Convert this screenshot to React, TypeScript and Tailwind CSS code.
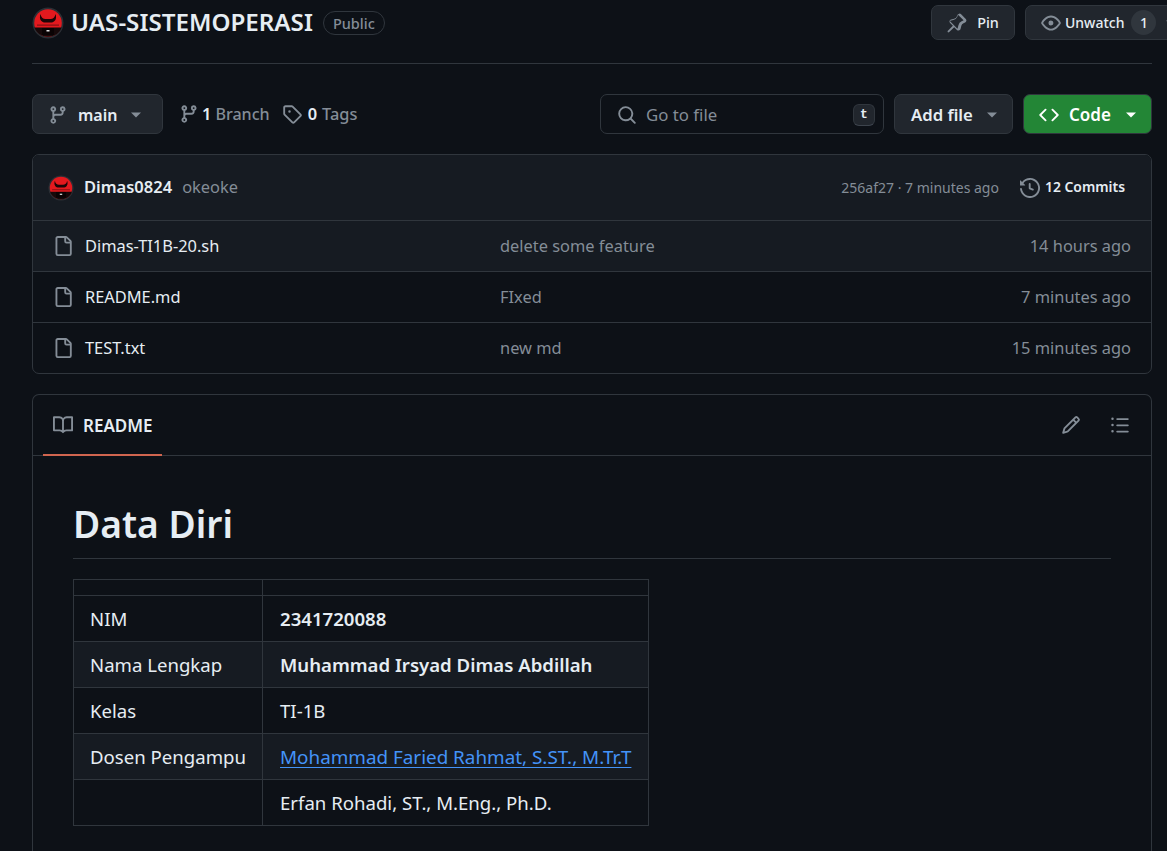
import type { ReactNode } from "react";

const icons = {
  branch: "M9.5 3.25a2.25 2.25 0 1 1 3 2.122V6A2.5 2.5 0 0 1 10 8.5H6a1 1 0 0 0-1 1v1.128a2.251 2.251 0 1 1-1.5 0V5.372a2.25 2.25 0 1 1 1.5 0v1.836A2.493 2.493 0 0 1 6 7h4a1 1 0 0 0 1-1v-.628A2.25 2.25 0 0 1 9.5 3.25Zm-6 0a.75.75 0 1 0 1.5 0 .75.75 0 0 0-1.5 0Zm8.25-.75a.75.75 0 1 0 0 1.5.75.75 0 0 0 0-1.5ZM4.25 12a.75.75 0 1 0 0 1.5.75.75 0 0 0 0-1.5Z",
  tag: "M1 7.775V2.75C1 1.784 1.784 1 2.75 1h5.025c.464 0 .91.184 1.238.513l6.25 6.25a1.75 1.75 0 0 1 0 2.474l-5.026 5.026a1.75 1.75 0 0 1-2.474 0l-6.25-6.25A1.75 1.75 0 0 1 1 7.775Zm1.5 0c0 .066.026.13.073.177l6.25 6.25a.25.25 0 0 0 .354 0l5.025-5.025a.25.25 0 0 0 0-.354l-6.25-6.25a.25.25 0 0 0-.177-.073H2.75a.25.25 0 0 0-.25.25ZM6 5a1 1 0 1 1 0 2 1 1 0 0 1 0-2Z",
  pin: "m11.294.984 3.722 3.722a1.75 1.75 0 0 1-.504 2.826l-1.327.613a3.089 3.089 0 0 0-1.707 2.084l-.584 2.454c-.317 1.332-1.972 1.8-2.94.832L5.75 11.311 1.78 15.28a.749.749 0 0 1-1.275-.326.749.749 0 0 1 .215-.734L4.69 10.25 2.487 8.046c-.968-.968-.5-2.623.832-2.94l2.454-.584a3.08 3.08 0 0 0 2.084-1.707l.613-1.327a1.75 1.75 0 0 1 2.824-.504Zm-2.128.743a.25.25 0 0 0-.403.072l-.613 1.327a4.582 4.582 0 0 1-3.1 2.539l-2.454.584a.25.25 0 0 0-.119.42l5.657 5.657a.25.25 0 0 0 .42-.119l.584-2.454a4.588 4.588 0 0 1 2.539-3.1l1.327-.613a.25.25 0 0 0 .072-.403l-3.91-3.91Z",
  eye: "M8 2c1.981 0 3.671.992 4.933 2.078 1.27 1.091 2.187 2.345 2.637 3.023a1.62 1.62 0 0 1 0 1.798c-.45.678-1.367 1.932-2.637 3.023C11.67 13.008 9.981 14 8 14c-1.981 0-3.671-.992-4.933-2.078C1.797 10.83.88 9.576.43 8.898a1.62 1.62 0 0 1 0-1.798c.45-.677 1.367-1.931 2.637-3.022C4.33 2.992 6.019 2 8 2ZM1.679 7.932a.12.12 0 0 0 0 .136c.411.622 1.241 1.75 2.366 2.717C5.176 11.758 6.527 12.5 8 12.5c1.473 0 2.825-.742 3.955-1.715 1.124-.967 1.954-2.096 2.366-2.717a.12.12 0 0 0 0-.136c-.412-.621-1.242-1.75-2.366-2.717C10.824 4.242 9.473 3.5 8 3.5c-1.473 0-2.825.742-3.955 1.715-1.124.967-1.954 2.096-2.366 2.717ZM8 10a2 2 0 1 1-.001-3.999A2 2 0 0 1 8 10Z",
  search: "M10.68 11.74a6 6 0 0 1-7.922-8.982 6 6 0 0 1 8.982 7.922l3.04 3.04a.749.749 0 0 1-.326 1.275.749.749 0 0 1-.734-.215ZM11.5 7a4.499 4.499 0 1 0-8.997 0A4.499 4.499 0 0 0 11.5 7Z",
  code: "m11.28 3.22 4.25 4.25a.75.75 0 0 1 0 1.06l-4.25 4.25a.749.749 0 0 1-1.275-.326.749.749 0 0 1 .215-.734L13.94 8l-3.72-3.72a.749.749 0 0 1 .326-1.275.749.749 0 0 1 .734.215Zm-6.56 0a.751.751 0 0 1 1.042.018.751.751 0 0 1 .018 1.042L2.06 8l3.72 3.72a.749.749 0 0 1-.326 1.275.749.749 0 0 1-.734-.215L.47 8.53a.75.75 0 0 1 0-1.06Z",
  history: "m.427 1.927 1.215 1.215a8.002 8.002 0 1 1-1.6 5.685.75.75 0 1 1 1.493-.154 6.5 6.5 0 1 0 1.18-4.458l1.358 1.358A.25.25 0 0 1 3.896 6H.25A.25.25 0 0 1 0 5.75V2.104a.25.25 0 0 1 .427-.177ZM7.75 4a.75.75 0 0 1 .75.75v2.992l2.028.812a.75.75 0 0 1-.557 1.392l-2.5-1A.751.751 0 0 1 7 8.25v-3.5A.75.75 0 0 1 7.75 4Z",
  file: "M2 1.75C2 .784 2.784 0 3.75 0h6.586c.464 0 .909.184 1.237.513l2.914 2.914c.329.328.513.773.513 1.237v9.586A1.75 1.75 0 0 1 13.25 16h-9.5A1.75 1.75 0 0 1 2 14.25Zm1.75-.25a.25.25 0 0 0-.25.25v12.5c0 .138.112.25.25.25h9.5a.25.25 0 0 0 .25-.25V6h-2.75A1.75 1.75 0 0 1 9 4.25V1.5Zm6.75.062V4.25c0 .138.112.25.25.25h2.688l-.011-.013-2.914-2.914-.013-.011Z",
  book: "M0 1.75A.75.75 0 0 1 .75 1h4.253c1.227 0 2.317.59 3 1.501A3.743 3.743 0 0 1 11.006 1h4.245a.75.75 0 0 1 .75.75v10.5a.75.75 0 0 1-.75.75h-4.507a2.25 2.25 0 0 0-1.591.659l-.622.621a.75.75 0 0 1-1.06 0l-.622-.621A2.25 2.25 0 0 0 5.258 13H.75a.75.75 0 0 1-.75-.75Zm7.251 10.324.004-5.073-.002-2.253A2.25 2.25 0 0 0 5.003 2.5H1.5v9h3.757a3.75 3.75 0 0 1 1.994.574ZM8.755 4.75l-.004 7.322a3.752 3.752 0 0 1 1.992-.572H14.5v-9h-3.495a2.25 2.25 0 0 0-2.25 2.25Z",
  pencil: "M11.013 1.427a1.75 1.75 0 0 1 2.474 0l1.086 1.086a1.75 1.75 0 0 1 0 2.474l-8.61 8.61c-.21.21-.47.364-.756.445l-3.251.93a.75.75 0 0 1-.927-.928l.929-3.25c.081-.286.235-.547.445-.758l8.61-8.61Zm.176 4.823L9.75 4.81l-6.286 6.287a.253.253 0 0 0-.064.108l-.558 1.953 1.953-.558a.253.253 0 0 0 .108-.064Zm1.238-3.763a.25.25 0 0 0-.354 0L10.811 3.75l1.439 1.44 1.263-1.263a.25.25 0 0 0 0-.354Z",
  list: "M5.75 2.5h8.5a.75.75 0 0 1 0 1.5h-8.5a.75.75 0 0 1 0-1.5Zm0 5h8.5a.75.75 0 0 1 0 1.5h-8.5a.75.75 0 0 1 0-1.5Zm0 5h8.5a.75.75 0 0 1 0 1.5h-8.5a.75.75 0 0 1 0-1.5ZM2 14a1 1 0 1 1 0-2 1 1 0 0 1 0 2Zm1-6a1 1 0 1 1-2 0 1 1 0 0 1 2 0ZM2 4a1 1 0 1 1 0-2 1 1 0 0 1 0 2Z",
};

const Octicon = ({ name, className = "" }: { name: keyof typeof icons; className?: string }) => (
  <svg viewBox="0 0 16 16" fill="currentColor" fillRule="evenodd" className={`h-5 w-5 shrink-0 text-[#848d97] ${className}`}>
    <path d={icons[name]} />
  </svg>
);

const Caret = ({ className = "" }: { className?: string }) => (
  <svg viewBox="0 0 10 6" fill="currentColor" className={`h-[6px] w-[10px] shrink-0 ${className}`}>
    <path d="M0 0.5h10L5 5.5z" />
  </svg>
);

// bull logo avatar
const Avatar = ({ className = "" }: { className?: string }) => (
  <svg viewBox="0 0 32 32" className={`shrink-0 rounded-full ${className}`}>
    <circle cx="16" cy="16" r="15.5" fill="#2b2f35" />
    <circle cx="16" cy="16" r="13.8" fill="#e3191e" />
    <path d="M2.5 20.500h27C27.800 26 22.500 29.800 16 29.800S4.200 26 2.500 20.500z" fill="#16090a" />
    <path d="M10 21h12v7h-12z" fill="#0a0304" />
    <path d="M8.500 7C7 11 8.500 14.500 12 15.500h8c3.500-1 5-4.500 3.500-8.500-.3 3-2.500 5-5 5h-5c-2.500 0-4.700-2-5-5z" fill="#1c0608" />
    <path d="M5 17.500h22v1.200H5z" fill="#8a1014" />
    <rect x="14.500" y="23" width="3" height="1.500" fill="#e0e0e0" />
  </svg>
);

const Btn = ({ children, className = "" }: { children: ReactNode; className?: string }) => (
  <div className={`flex shrink-0 items-center rounded-[7px] border border-[#30363d] bg-[#21262d] font-medium text-[#e6edf3] ${className}`}>
    {children}
  </div>
);

const files = [
  { name: "Dimas-TI1B-20.sh", message: "delete some feature", age: "14 hours ago", hovered: true },
  { name: "README.md", message: "FIxed", age: "7 minutes ago", hovered: false },
  { name: "TEST.txt", message: "new md", age: "15 minutes ago", hovered: false },
];

const people = [
  { id: "nim", label: "NIM", value: <strong className="font-semibold">2341720088</strong> },
  { id: "nama", label: "Nama Lengkap", value: <strong className="font-semibold">Muhammad Irsyad Dimas Abdillah</strong> },
  { id: "kelas", label: "Kelas", value: "TI-1B" },
  {
    id: "dosen",
    label: "Dosen Pengampu",
    value: <span className="text-[18.850px] text-[#4493f8] underline underline-offset-[3px]">Mohammad Faried Rahmat, S.ST., M.Tr.T</span>,
  },
  { id: "dosen2", label: "", value: "Erfan Rohadi, ST., M.Eng., Ph.D." },
];

export default function App() {
  return (
    <div className="h-[851px] overflow-hidden bg-[#0d1117] pl-8 pr-[15px] font-['Noto_Sans',sans-serif] text-[16.4px] text-[#e6edf3]">
      {/* Repo title */}
      <div className="flex h-[64px] items-start justify-between border-b border-[#30363d] pb-[23px] pt-[5px]">
        <div className="flex h-[35px] items-center">
          <Avatar className="h-8 w-8" />
          <span className="ml-[7px] text-[24.200px] font-semibold">UAS-SISTEMOPERASI</span>
          <span className="ml-[10px] rounded-full border border-[#30363d] px-[9px] text-[14.500px] leading-[22px] font-medium text-[#848d97]">Public</span>
        </div>
        <div className="-mr-[15px] flex w-[236px] gap-[10px] overflow-hidden">
          <Btn className="h-[35px] w-[84px] justify-center gap-[10px] text-[14.400px]">
            <Octicon name="pin" />
            Pin
          </Btn>
          <Btn className="h-[35px] w-[180px] gap-[4px] pl-[15px] text-[14px]">
            <Octicon name="eye" />
            Unwatch
            <span className="ml-[3px] flex h-[25px] w-[25px] items-center justify-center rounded-full bg-[#30363d] text-[14px]">1</span>
            <Caret className="ml-[6px] text-[#848d97]" />
          </Btn>
        </div>
      </div>

      {/* Branch row */}
      <div className="mt-[30px] flex h-10 items-center">
        <Btn className="h-10 w-[131px] pl-[15px] pt-px">
          <Octicon name="branch" />
          <span className="ml-[10px] text-[16px] font-semibold">main</span>
          <Caret className="ml-[14px] text-[#848d97]" />
        </Btn>
        <div className="flex items-center pt-px">
          <Octicon name="branch" className="ml-[16px]" />
          <span className="ml-[3px] font-semibold">1</span>
          <span className="ml-[4px] text-[16.100px] font-medium text-[#848d97]">Branch</span>
          <Octicon name="tag" className="ml-[12px]" />
          <span className="ml-[6px] font-semibold">0</span>
          <span className="ml-[5px] text-[16.400px] font-medium text-[#848d97]">Tags</span>
        </div>

        <div className="ml-auto flex h-10 w-[284px] items-center rounded-[7px] border border-[#30363d] pl-[16px] pr-[8px] pt-px">
          <Octicon name="search" />
          <span className="ml-[9px] text-[16.800px] text-[#848d97]">Go to file</span>
          <span className="ml-auto flex h-[22px] w-[22px] items-center justify-center rounded-[6px] border border-[#30363d] border-b-[#3d444d] bg-[#21262d] font-['Liberation_Mono',monospace] text-[13px] font-bold">t</span>
        </div>
        <Btn className="ml-[10px] h-10 w-[119px] pl-4 pt-px">
          <span className="text-[16.700px] font-semibold">Add file</span>
          <Caret className="ml-[14px] text-[#848d97]" />
        </Btn>
        <Btn className="ml-[10px] h-10 w-[129px] border-[#2e9a40] bg-[#238636] pl-[15px] pt-px text-white">
          <Octicon name="code" className="text-white" />
          <span className="ml-[10px] text-[17px] font-semibold">Code</span>
          <Caret className="ml-[15px] text-white" />
        </Btn>
      </div>

      {/* File list */}
      <div className="mt-5 overflow-hidden rounded-[7px] border border-[#30363d]">
        <div className="flex h-[65px] items-center bg-[#161b22] pl-[15px] pr-[26px]">
          <Avatar className="h-[26px] w-[26px]" />
          <span className="ml-[10px] text-[16.500px] font-semibold">Dimas0824</span>
          <span className="ml-[10px] text-[#848d97]">okeoke</span>
          <span className="ml-auto text-[14px] text-[#848d97]">256af27 · 7 minutes ago</span>
          <Octicon name="history" className="ml-[21px]" />
          <span className="ml-[5px] text-[13.900px] font-semibold">12 Commits</span>
        </div>
        {files.map((file) => (
          <div key={file.name} className={`flex h-[51px] items-center border-t border-[#30363d] pl-[20px] pr-5 ${file.hovered ? "bg-[#161b22]" : ""}`}>
            <Octicon name="file" />
            <span className="ml-[12px] w-[415px]">{file.name}</span>
            <span className="text-[#848d97]">{file.message}</span>
            <span className="ml-auto text-[#848d97]">{file.age}</span>
          </div>
        ))}
      </div>

      {/* README */}
      <div className="mt-5 rounded-t-[7px] border border-b-0 border-[#30363d] pb-10">
        <div className="flex h-[61px] items-center justify-between border-b border-[#30363d] pl-[10px] pr-[21px]">
          <div className="relative flex h-full w-[119px] items-center pl-[10px]">
            <Octicon name="book" />
            <span className="ml-[10px] pt-px text-[17px] font-semibold">README</span>
            <div className="absolute -bottom-px left-0 right-0 h-[2px] bg-[#d0654f]" />
          </div>
          <div className="flex items-center gap-[29px]">
            <Octicon name="pencil" />
            <Octicon name="list" />
          </div>
        </div>
        <div className="px-10 pt-[40px] text-[18.600px]">
          <h1 className="border-b border-[#30363d] pb-[6px] text-[37.200px] leading-[56px] font-semibold">Data Diri</h1>
          <table className="mt-5 border-collapse">
            <thead>
              <tr>
                <th className="w-[189px] border border-[#30363d] p-0 py-[7.5px]" />
                <th className="w-[386px] border border-[#30363d] p-0 py-[7.5px]" />
              </tr>
            </thead>
            <tbody>
              {people.map((row) => (
                <tr key={row.id} className="border-t border-[#30363d] even:bg-[#161b22]">
                  <td className="border border-[#30363d] px-4 py-[7.5px] leading-[30px] whitespace-nowrap">{row.label}</td>
                  <td className="border border-[#30363d] py-[7.5px] pl-[17px] pr-4 leading-[30px] whitespace-nowrap">{row.value}</td>
                </tr>
              ))}
            </tbody>
          </table>
        </div>
      </div>
    </div>
  );
}
